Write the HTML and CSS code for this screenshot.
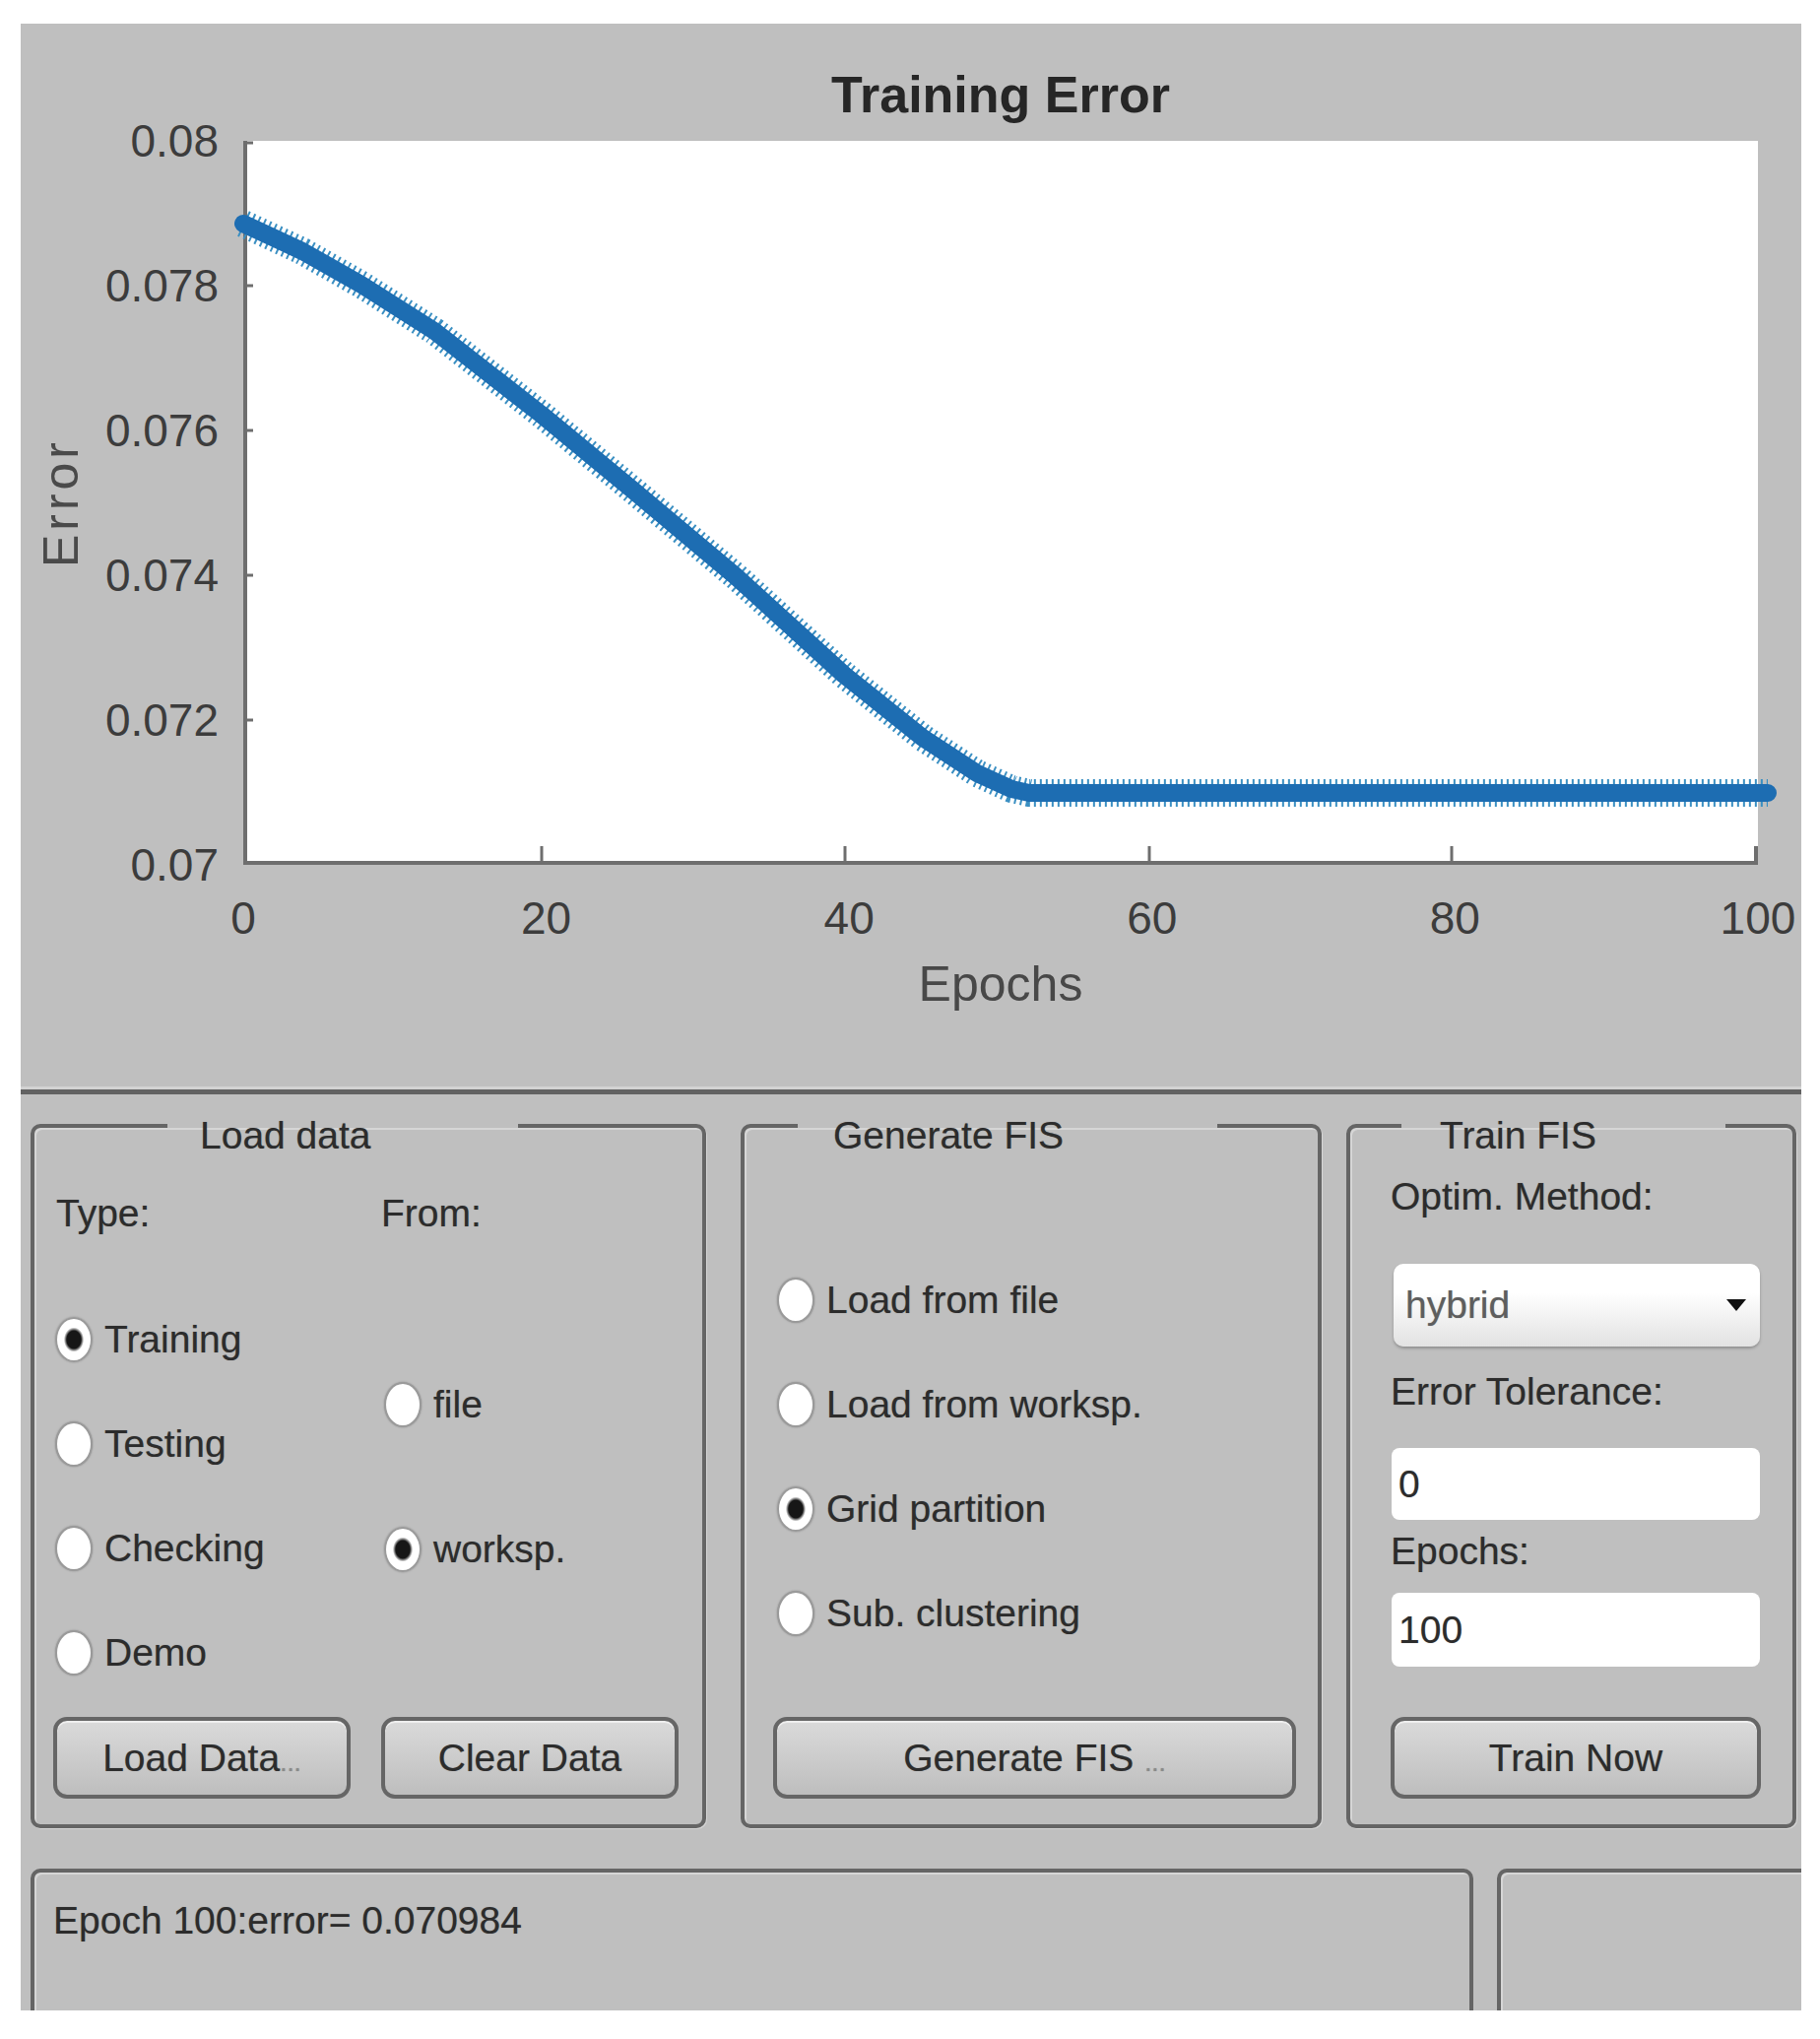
FILE: index.html
```html
<!DOCTYPE html>
<html lang="en">
<head>
    <meta charset="UTF-8">
    <title>ANFIS Training</title>
    <link rel="stylesheet" href="styles.css">
</head>
<body>

<div class="window">
    <!-- training error plot -->
    <div class="figure">
        <h1 class="plot-title">Training Error</h1>
        <div class="axes-row">
            <div class="ylabel"><span>Error</span></div>
            <div class="yticks">
                <span>0.08</span>
                <span>0.078</span>
                <span>0.076</span>
                <span>0.074</span>
                <span>0.072</span>
                <span>0.07</span>
            </div>
            <div class="plot">
                <svg class="curve" viewBox="0 0 1538 735">
                    <g class="tick">
                        <line x1="303" y1="733" x2="303" y2="716"/>
                        <line x1="611" y1="733" x2="611" y2="716"/>
                        <line x1="920" y1="733" x2="920" y2="716"/>
                        <line x1="1227" y1="733" x2="1227" y2="716"/>
                        <line x1="0" y1="2" x2="10" y2="2"/>
                        <line x1="0" y1="147" x2="10" y2="147"/>
                        <line x1="0" y1="294" x2="10" y2="294"/>
                        <line x1="0" y1="441" x2="10" y2="441"/>
                        <line x1="0" y1="588" x2="10" y2="588"/>
                    </g>
                    <path class="axis" d="M2 0 V733 H1536 V716"/>
                    <path class="err-fringe" d="M0 84 L60 112 L120 146 L194 193 L303 278 L395 354 L500 442 L610 542 L690 606 L745 642 L780 658 L798 662 L1548 662"/>
                    <path class="err-line" d="M0 84 L60 112 L120 146 L194 193 L303 278 L395 354 L500 442 L610 542 L690 606 L745 642 L780 658 L798 662 L1548 662"/>
                </svg>
            </div>
        </div>
        <div class="xticks">
            <span>0</span>
            <span>20</span>
            <span>40</span>
            <span>60</span>
            <span>80</span>
            <span>100</span>
        </div>
        <div class="xlabel">Epochs</div>
    </div>

    <!-- control panels -->
    <div class="controls">
        <fieldset class="group group-load">
            <legend>Load data</legend>
            <div class="load-cols">
                <div class="col col-type">
                    <div class="field-label">Type:</div>
                    <label class="radio"><input type="radio" name="type" checked>Training</label>
                    <label class="radio"><input type="radio" name="type">Testing</label>
                    <label class="radio"><input type="radio" name="type">Checking</label>
                    <label class="radio"><input type="radio" name="type">Demo</label>
                </div>
                <div class="col col-from">
                    <div class="field-label">From:</div>
                    <label class="radio radio-file"><input type="radio" name="from">file</label>
                    <label class="radio radio-worksp"><input type="radio" name="from" checked>worksp.</label>
                </div>
            </div>
            <div class="btn-row">
                <button class="btn">Load Data<span class="dots">...</span></button>
                <button class="btn">Clear Data</button>
            </div>
        </fieldset>

        <fieldset class="group group-gen">
            <legend>Generate FIS</legend>
            <div class="gen-list">
                <label class="radio"><input type="radio" name="gen">Load from file</label>
                <label class="radio"><input type="radio" name="gen">Load from worksp.</label>
                <label class="radio"><input type="radio" name="gen" checked>Grid partition</label>
                <label class="radio"><input type="radio" name="gen">Sub. clustering</label>
            </div>
            <div class="btn-row">
                <button class="btn btn-wide">Generate FIS <span class="dots">...</span></button>
            </div>
        </fieldset>

        <fieldset class="group group-train">
            <legend>Train FIS</legend>
            <div class="field-label label-optim">Optim. Method:</div>
            <div class="select">
                <span>hybrid</span>
                <svg class="caret" viewBox="0 0 20 12"><path d="M0 0 H20 L10 12 Z"/></svg>
            </div>
            <div class="field-label label-tol">Error Tolerance:</div>
            <input class="text-input" type="text" value="0">
            <div class="field-label label-epochs">Epochs:</div>
            <input class="text-input input-epochs" type="text" value="100">
            <div class="btn-row">
                <button class="btn btn-wide">Train Now</button>
            </div>
        </fieldset>
    </div>

    <!-- status line -->
    <div class="status-row">
        <div class="status">Epoch 100:error= 0.070984</div>
        <div class="status status-side"></div>
    </div>
</div>

</body>
</html>
```

FILE: styles.css
```css
body {
    margin: 0;
    background: #ffffff;
    font-family: "Liberation Sans", Arial, sans-serif;
    color: #333333;
}

.window {
    margin: 24px 0 0 21px;
    width: 1808px;
    height: 2017px;
    background: #bfbfbf;
    overflow: hidden;
}

/* ---------- plot ---------- */

.figure {
    height: 1082px;
    display: flex;
    flex-direction: column;
}

.plot-title {
    margin: 42px 0 17px;
    padding: 0 44px 0 226px;
    font-size: 52px;
    line-height: 60px;
    font-weight: bold;
    text-align: center;
    color: #262626;
}

.axes-row {
    display: flex;
    height: 735px;
}

.ylabel {
    width: 82px;
    display: flex;
    align-items: center;
    justify-content: center;
}

.ylabel span {
    writing-mode: vertical-rl;
    transform: rotate(180deg);
    font-size: 50px;
    letter-spacing: 4px;
    color: #4a4a4a;
}

.yticks {
    width: 119px;
    margin: -25px 25px -25px 0;
    display: flex;
    flex-direction: column;
    justify-content: space-between;
    align-items: flex-end;
    font-size: 46px;
    line-height: 50px;
    color: #3c3c3c;
}

.plot {
    width: 1538px;
    background: #ffffff;
}

.curve {
    display: block;
    width: 100%;
    height: 100%;
    overflow: visible;
}

.tick {
    stroke: #6e6e6e;
    stroke-width: 3;
}

.axis {
    fill: none;
    stroke: #6e6e6e;
    stroke-width: 4;
}

.err-fringe {
    fill: none;
    stroke: #3a8fc2;
    stroke-width: 28;
    stroke-dasharray: 2 4;
    stroke-linejoin: round;
}

.err-line {
    fill: none;
    stroke: #1d6db2;
    stroke-width: 18;
    stroke-linejoin: round;
    stroke-linecap: round;
}

.xticks {
    margin: 29px -6px 0 176px;
    display: flex;
    justify-content: space-between;
    font-size: 46px;
    line-height: 50px;
    color: #3c3c3c;
}

.xticks span {
    width: 100px;
    text-align: center;
}

.xlabel {
    margin-top: 14px;
    padding: 0 44px 0 226px;
    font-size: 50px;
    line-height: 56px;
    text-align: center;
    color: #484848;
}

/* ---------- control panels ---------- */

.controls {
    height: 786px;
    border-top: 5px solid #626262;
    box-shadow: 0 -3px 0 #d2d2d2;
    display: flex;
    align-items: flex-start;
    padding-left: 10px;
    font-size: 39px;
    color: #2c2c2c;
    text-shadow: 0 0 1px rgba(0, 0, 0, 0.35);
}

.group {
    box-sizing: border-box;
    height: 745px;
    margin: 0;
    padding: 0;
    min-width: 0;
    border: 4px solid #656565;
    border-radius: 10px;
    box-shadow: inset 2px 2px 0 #d6d6d6, 1px 1px 0 #d6d6d6;
    display: flex;
    flex-direction: column;
}

.group legend {
    box-sizing: border-box;
    padding: 20px 0 0;
    font-size: 39px;
    line-height: 44px;
}

.group-load {
    width: 686px;
}

.group-load legend {
    margin-left: 135px;
    width: 356px;
    padding-left: 33px;
}

.group-gen {
    width: 590px;
    margin-left: 35px;
}

.group-gen legend {
    margin-left: 54px;
    width: 426px;
    padding-left: 36px;
}

.group-train {
    width: 457px;
    margin-left: 25px;
}

.group-train legend {
    margin-left: 52px;
    width: 329px;
    padding-left: 39px;
}

.field-label {
    line-height: 44px;
}

.radio {
    display: flex;
    align-items: center;
    gap: 12px;
    height: 60px;
    line-height: 44px;
}

.radio input {
    appearance: none;
    margin: 0;
    width: 38px;
    height: 46px;
    border-radius: 50%;
    border: 2px solid #9a9a9a;
    background: #ffffff;
    box-shadow: 0 0 2px #8a8a8a;
    flex-shrink: 0;
}

.radio input:checked {
    background: radial-gradient(#161616 30%, #ffffff 42%);
}

/* load data */

.load-cols {
    display: grid;
    grid-template-columns: 330px 1fr;
    padding-left: 22px;
    margin-top: 35px;
}

.col {
    display: flex;
    flex-direction: column;
    gap: 46px;
}

.col-type .radio:first-of-type {
    margin-top: 30px;
}

.col-type .radio {
    margin-left: -1px;
}

.col-from .radio {
    margin-left: 3px;
}

.radio-file {
    margin-top: 96px;
}

.radio-worksp {
    margin-top: 41px;
}

.btn-row {
    margin-top: auto;
    margin-bottom: 26px;
    display: flex;
    gap: 31px;
}

.group-load .btn-row {
    padding-left: 19px;
}

.btn {
    width: 302px;
    height: 83px;
    padding: 0;
    font-family: inherit;
    font-size: 39px;
    color: #2c2c2c;
    text-shadow: inherit;
    border: 4px solid #666666;
    border-radius: 14px;
    background: linear-gradient(#dadada, #bebebe);
    box-shadow: inset 0 2px 0 #eeeeee;
}

.dots {
    color: #8a8a8a;
    font-size: 26px;
}

/* generate fis */

.gen-list {
    display: flex;
    flex-direction: column;
    gap: 46px;
    margin-top: 115px;
    padding-left: 33px;
}

.group-gen .btn-row {
    padding-left: 29px;
}

.group-gen .btn-wide {
    width: 531px;
}

/* train fis */

.group-train .field-label {
    padding-left: 41px;
}

.label-optim {
    margin-top: 18px;
}

.select {
    box-sizing: border-box;
    width: 372px;
    height: 84px;
    margin: 46px 0 0 44px;
    padding: 0 14px 0 12px;
    border-radius: 10px;
    background: linear-gradient(#ffffff 35%, #e2e2e2);
    box-shadow: 0 2px 3px rgba(0, 0, 0, 0.25);
    display: flex;
    align-items: center;
    justify-content: space-between;
    color: #5e5e5e;
}

.caret {
    width: 20px;
    height: 12px;
    fill: #111111;
}

.label-tol {
    margin-top: 24px;
}

.text-input {
    box-sizing: border-box;
    width: 374px;
    height: 73px;
    margin: 35px 0 0 42px;
    padding: 0 7px;
    border: none;
    border-radius: 8px;
    background: #ffffff;
    font-family: inherit;
    font-size: 39px;
    color: #2c2c2c;
    text-shadow: inherit;
}

.label-epochs {
    margin-top: 10px;
}

.input-epochs {
    margin-top: 20px;
    height: 75px;
}

.group-train .btn-row {
    padding-left: 41px;
}

.group-train .btn-wide {
    width: 376px;
}

/* ---------- status line ---------- */

.status-row {
    display: flex;
    gap: 24px;
    padding-left: 10px;
    color: #2c2c2c;
    text-shadow: 0 0 1px rgba(0, 0, 0, 0.35);
}

.status {
    box-sizing: border-box;
    flex-shrink: 0;
    width: 1465px;
    height: 220px;
    padding: 27px 0 0 19px;
    border: 4px solid #656565;
    border-radius: 10px;
    box-shadow: inset 2px 2px 0 #d6d6d6;
    font-size: 39px;
    line-height: 44px;
}

.status-side {
    width: 340px;
}
```
